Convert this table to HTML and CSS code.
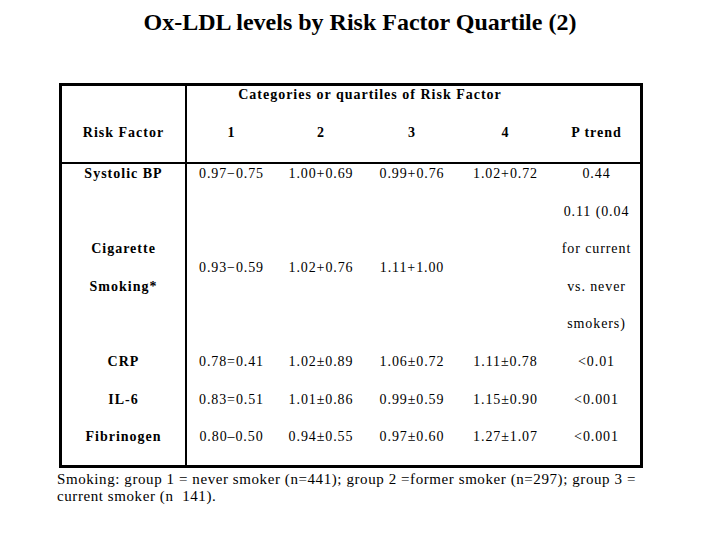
FILE: index.html
```html
<!DOCTYPE html>
<html lang="en">
<head>
<meta charset="utf-8">
<title>Ox-LDL levels by Risk Factor Quartile (2)</title>
<link rel="stylesheet" href="styles.css">
</head>
<body>
<h1 class="title">Ox-LDL levels by Risk Factor Quartile (2)</h1>
<div class="sheet">
  <div class="grid">
    <div class="c0 hd1"></div>
    <div class="cat">Categories or quartiles of Risk Factor</div>
    <div class="hd1"></div>

    <div class="c0 hd2 b">Risk Factor</div>
    <div class="hd2 b">1</div>
    <div class="hd2 b">2</div>
    <div class="hd2 b">3</div>
    <div class="hd2 b">4</div>
    <div class="hd2 b">P trend</div>

    <div class="c0 cell b">Systolic BP</div>
    <div class="cell">0.97−0.75</div>
    <div class="cell">1.00+0.69</div>
    <div class="cell">0.99+0.76</div>
    <div class="cell">1.02+0.72</div>
    <div class="cell">0.44</div>

    <div class="c0 cell b"><span>Cigarette</span><span>Smoking*</span></div>
    <div class="cell">0.93−0.59</div>
    <div class="cell">1.02+0.76</div>
    <div class="cell">1.11+1.00</div>
    <div class="cell"></div>
    <div class="cell"><span>0.11 (0.04</span><span>for current</span><span>vs. never</span><span>smokers)</span></div>

    <div class="c0 cell b">CRP</div>
    <div class="cell">0.78=0.41</div>
    <div class="cell">1.02±0.89</div>
    <div class="cell">1.06±0.72</div>
    <div class="cell">1.11±0.78</div>
    <div class="cell">&lt;0.01</div>

    <div class="c0 cell b">IL-6</div>
    <div class="cell">0.83=0.51</div>
    <div class="cell">1.01±0.86</div>
    <div class="cell">0.99±0.59</div>
    <div class="cell">1.15±0.90</div>
    <div class="cell">&lt;0.001</div>

    <div class="c0 cell b">Fibrinogen</div>
    <div class="cell">0.80–0.50</div>
    <div class="cell">0.94±0.55</div>
    <div class="cell">0.97±0.60</div>
    <div class="cell">1.27±1.07</div>
    <div class="cell">&lt;0.001</div>
  </div>
</div>
<p class="note">Smoking: group 1 = never smoker (n=441); group 2 =former smoker (n=297); group 3 =<br>current smoker (n&nbsp; 141).</p>
</body>
</html>
```
FILE: styles.css
```css
html, body {
  margin: 0;
  padding: 0;
  background: #fff;
  color: #000;
  font-family: "Liberation Serif", "Times New Roman", serif;
}

.title {
  margin: 0;
  padding-top: 8px;
  font-size: 24px;
  line-height: 28px;
  font-weight: bold;
  text-align: center;
}

.sheet {
  margin: 47px 0 0 59px;
  width: 578px;
  border: 3px solid #000;
}

.grid {
  display: grid;
  grid-template-columns: 125px 89px 90px 92px 95px 87px;
  font-size: 14px;
  letter-spacing: 0.9px;
}

.c0 {
  border-right: 2px solid #000;
}

.b {
  font-weight: bold;
  letter-spacing: 1px;
}

.hd1 {
  height: 18px;
}

.cat {
  grid-column: 2 / 6;
  font-weight: bold;
  letter-spacing: 1px;
  line-height: 18px;
  text-align: center;
}

.hd2 {
  height: 58px;
  border-bottom: 2px solid #000;
  display: flex;
  align-items: center;
  justify-content: center;
}

.cell {
  display: flex;
  flex-direction: column;
  justify-content: center;
  align-items: center;
  gap: 17.6px;
  line-height: 20px;
  padding-bottom: 17.6px;
  white-space: nowrap;
}

.note {
  margin: 3px 0 0 57px;
  font-size: 15px;
  line-height: 17px;
  letter-spacing: 0.58px;
}
```
